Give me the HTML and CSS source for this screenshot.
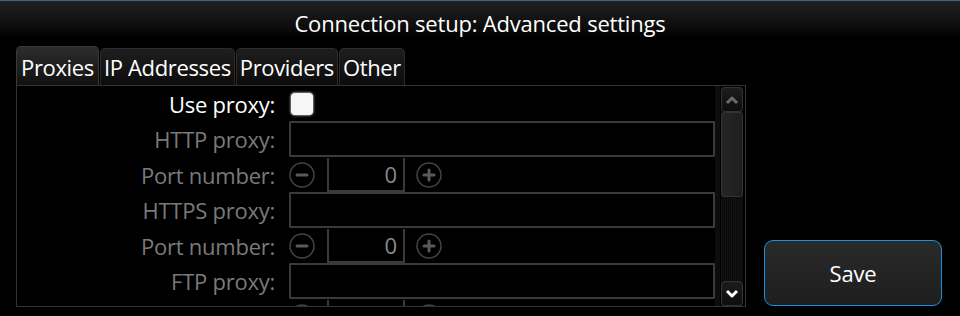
FILE: index.html
```html
<!DOCTYPE html>
<html lang="en">
<head>
    <meta charset="UTF-8">
    <title>Connection setup: Advanced settings</title>
    <link rel="stylesheet" href="styles.css">
</head>
<body>
    <header class="title-bar">
        <h1>Connection setup: Advanced settings</h1>
    </header>

    <div class="main">
        <div class="tab-area">
            <div class="tabs">
                <div class="tab active">Proxies</div>
                <div class="tab">IP Addresses</div>
                <div class="tab">Providers</div>
                <div class="tab">Other</div>
            </div>

            <div class="panel">
                <div class="form">
                    <div class="row row-check">
                        <label class="label enabled">Use proxy:</label>
                        <div class="checkbox"></div>
                    </div>
                    <div class="row row-input">
                        <label class="label">HTTP proxy:</label>
                        <div class="text-field"></div>
                    </div>
                    <div class="row row-port">
                        <label class="label">Port number:</label>
                        <div class="spinner">
                            <svg class="spin-btn" width="26" height="26" viewBox="0 0 26 26"><circle cx="13" cy="13" r="12" fill="none" stroke="#444" stroke-width="1.5"/><path d="M8 13h10" stroke="#5a5a5a" stroke-width="3" stroke-linecap="round"/></svg>
                            <div class="spin-value">0</div>
                            <svg class="spin-btn" width="26" height="26" viewBox="0 0 26 26"><circle cx="13" cy="13" r="12" fill="none" stroke="#444" stroke-width="1.5"/><path d="M8 13h10M13 8v10" stroke="#5a5a5a" stroke-width="3" stroke-linecap="round"/></svg>
                        </div>
                    </div>
                    <div class="row row-input">
                        <label class="label">HTTPS proxy:</label>
                        <div class="text-field"></div>
                    </div>
                    <div class="row row-port">
                        <label class="label">Port number:</label>
                        <div class="spinner">
                            <svg class="spin-btn" width="26" height="26" viewBox="0 0 26 26"><circle cx="13" cy="13" r="12" fill="none" stroke="#444" stroke-width="1.5"/><path d="M8 13h10" stroke="#5a5a5a" stroke-width="3" stroke-linecap="round"/></svg>
                            <div class="spin-value">0</div>
                            <svg class="spin-btn" width="26" height="26" viewBox="0 0 26 26"><circle cx="13" cy="13" r="12" fill="none" stroke="#444" stroke-width="1.5"/><path d="M8 13h10M13 8v10" stroke="#5a5a5a" stroke-width="3" stroke-linecap="round"/></svg>
                        </div>
                    </div>
                    <div class="row row-input">
                        <label class="label">FTP proxy:</label>
                        <div class="text-field"></div>
                    </div>
                    <!-- next row only peeks above the panel edge -->
                    <div class="row row-port">
                        <span class="label"></span>
                        <div class="spinner">
                            <svg class="spin-btn" width="26" height="26" viewBox="0 0 26 26"><circle cx="13" cy="13" r="12" fill="none" stroke="#444" stroke-width="1.5"/></svg>
                            <div class="spin-value"></div>
                            <svg class="spin-btn" width="26" height="26" viewBox="0 0 26 26"><circle cx="13" cy="13" r="12" fill="none" stroke="#444" stroke-width="1.5"/></svg>
                        </div>
                    </div>
                </div>

                <div class="scroll-grip"></div>
                <div class="scrollbar">
                    <div class="scroll-btn">
                        <svg width="14" height="10" viewBox="0 0 14 10"><path d="M2 8l5-5 5 5" fill="none" stroke="#6a6a6a" stroke-width="3" stroke-linejoin="round"/></svg>
                    </div>
                    <div class="scroll-thumb"></div>
                    <div class="scroll-track"></div>
                    <div class="scroll-btn">
                        <svg width="14" height="10" viewBox="0 0 14 10"><path d="M2 2l5 5 5-5" fill="none" stroke="#ffffff" stroke-width="3" stroke-linejoin="round"/></svg>
                    </div>
                </div>
            </div>
        </div>

        <div class="actions">
            <button class="save-btn">Save</button>
        </div>
    </div>
</body>
</html>
```

FILE: styles.css
```css
* {
    margin: 0;
    padding: 0;
    box-sizing: border-box;
}

body {
    width: 960px;
    height: 316px;
    overflow: hidden;
    background-color: #000;
    color: #fff;
    font-family: 'Open Sans', 'Noto Sans', sans-serif;
    font-size: 22px;
}

.title-bar {
    height: 46px;
    border-top: 1px solid #3c6582;
    background: linear-gradient(to bottom, #202020 0%, #0c0c0c 60%, #000 80%);
    text-align: center;
}

.title-bar h1 {
    font-size: 22px;
    font-weight: normal;
    line-height: 44px;
    letter-spacing: -0.2px;
}

.main {
    display: flex;
    padding-left: 16px;
}

.tab-area {
    width: 730px;
}

.tabs {
    display: flex;
    align-items: flex-end;
    gap: 1px;
    height: 39px;
}

.tab {
    height: 37px;
    padding: 0 3px;
    border: 1px solid #2c2c2c;
    border-bottom: none;
    border-radius: 5px 5px 0 0;
    background: linear-gradient(to bottom, #1e1e1e, #0c0c0c);
    line-height: 36px;
    letter-spacing: -0.35px;
}

.tab.active {
    height: 39px;
    padding: 0 4px;
    border-color: #3a3a3a;
    background: linear-gradient(to bottom, #2c2c2c, #121212);
    line-height: 40px;
}

.panel {
    display: flex;
    height: 222px;
    border: 1px solid #333;
    overflow: hidden;
}

.form {
    flex: 1;
    overflow: hidden;
}

.row {
    display: flex;
    align-items: center;
}

.row-check {
    height: 35px;
}

.row-input {
    height: 36px;
}

.row-port {
    height: 35px;
}

.label {
    width: 258px;
    margin-right: 14px;
    text-align: right;
    color: #7a7a7a;
    letter-spacing: -0.25px;
}

.label.enabled {
    color: #fff;
}

.checkbox {
    width: 22px;
    height: 22px;
    margin-left: 2px;
    margin-top: 1px;
    border-radius: 4px;
    background-color: #f6f6f6;
    box-shadow: 0 0 2px 1px rgba(255, 255, 255, 0.5);
}

.text-field {
    width: 426px;
    height: 36px;
    border: 2px solid #3a3a3a;
    border-radius: 1px;
}

.spinner {
    display: flex;
    align-items: center;
    height: 100%;
}

.spin-btn {
    display: block;
}

.spin-value {
    width: 78px;
    height: 34px;
    margin: 1px 11px 0 12px;
    align-self: flex-start;
    border: 2px solid #3a3a3a;
    border-top: none;
    padding-right: 6px;
    text-align: right;
    color: #8a8a8a;
    line-height: 32px;
}

.scroll-grip {
    width: 5px;
    background-image: radial-gradient(#1c1c1c 0.6px, transparent 0.8px);
    background-size: 2px 2px;
}

.scrollbar {
    display: flex;
    flex-direction: column;
    width: 22px;
    margin: 1px 2px 0 1px;
    background: repeating-linear-gradient(to right, #121212 0, #121212 1px, #0a0a0a 1px, #0a0a0a 2px);
}

.scroll-btn {
    display: flex;
    align-items: center;
    justify-content: center;
    height: 25px;
    border: 1px solid #333;
    border-radius: 4px;
    background: linear-gradient(to bottom, #1c1c1c, #0e0e0e);
}

.scroll-thumb {
    height: 85px;
    border: 1px solid #333;
    border-radius: 3px;
    background: linear-gradient(to right, #262626, #1e1e1e);
}

.scroll-track {
    flex: 1;
}

.actions {
    flex: 1;
    display: flex;
    align-items: flex-end;
    padding: 0 18px 1px 18px;
}

.save-btn {
    width: 178px;
    height: 66px;
    border: 1.5px solid #1a92e4;
    border-radius: 9px;
    background: linear-gradient(to bottom, #2a2a2a, #1e1e1e);
    color: #fff;
    font-family: 'Open Sans', 'Noto Sans', sans-serif;
    font-size: 22px;
    letter-spacing: -0.2px;
}
```
